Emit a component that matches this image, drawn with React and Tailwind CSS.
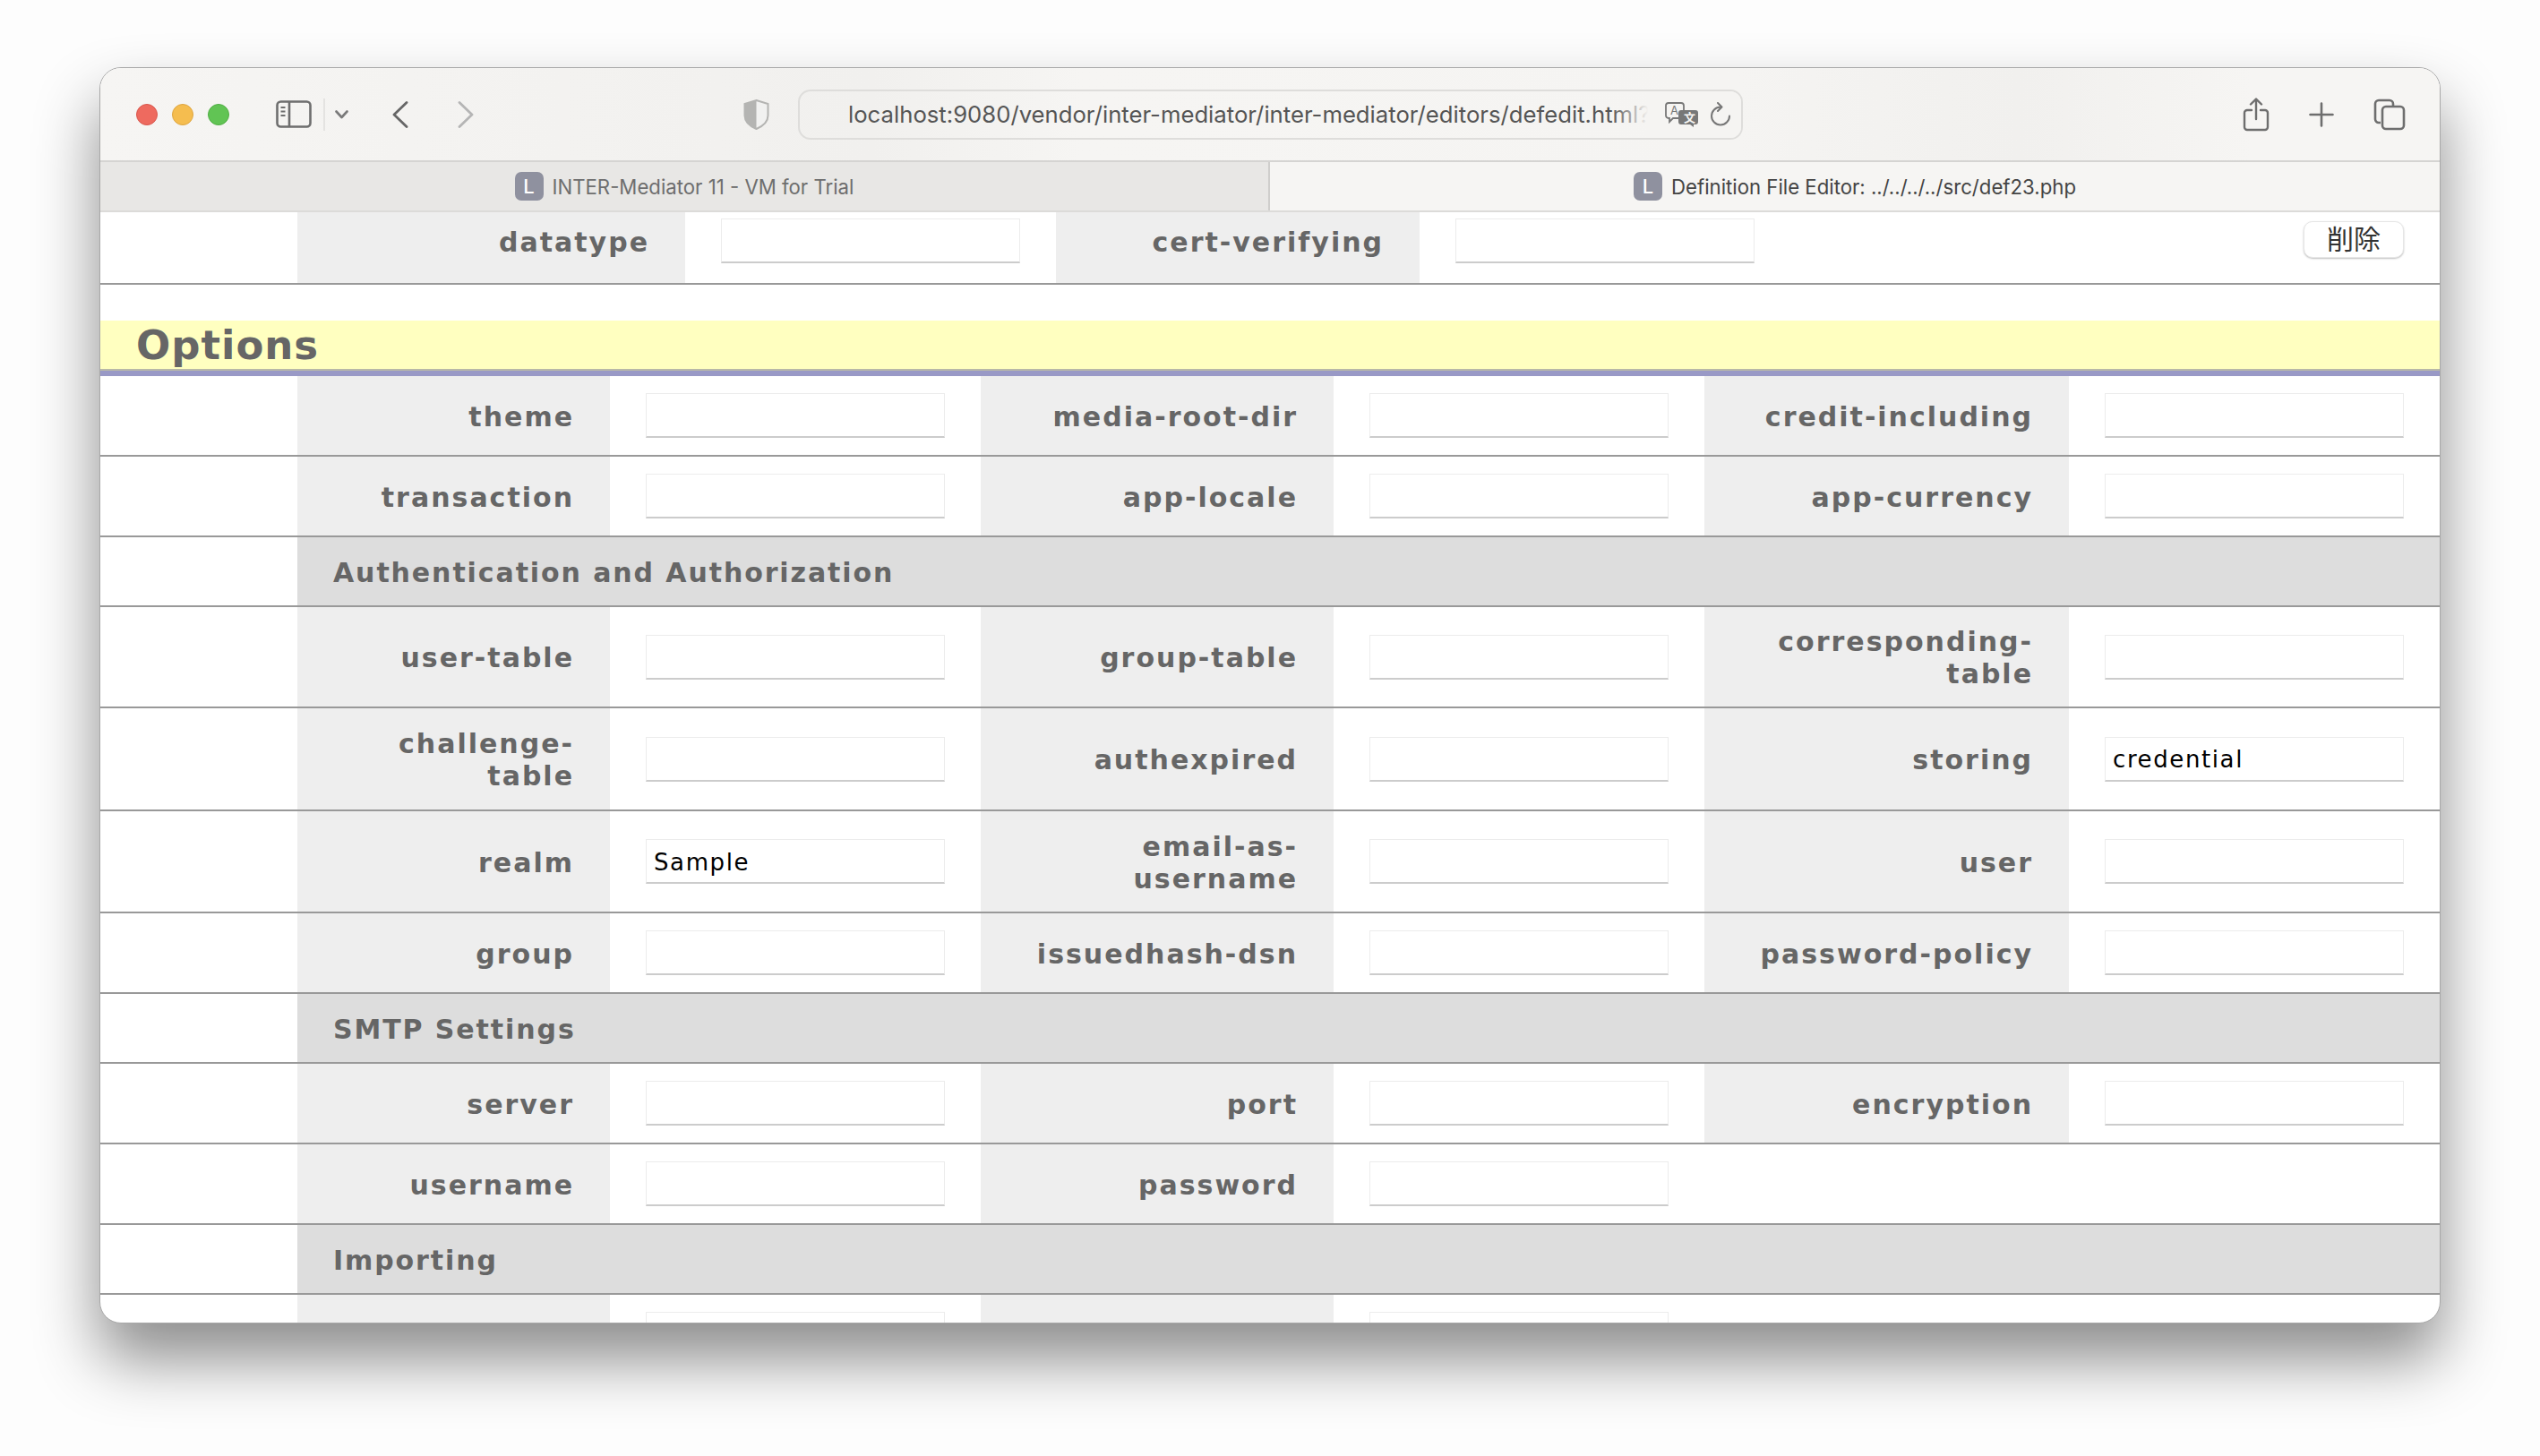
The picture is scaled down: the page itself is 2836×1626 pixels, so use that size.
import React from 'react';

const labelFont = "font-['DejaVu_Sans',sans-serif] font-bold text-[#666]";

function Field({ value = '', className = '' }) {
  return (
    <div className={`w-[414px] flex items-center pl-[40px] shrink-0 ${className}`}>
      <input
        readOnly
        value={value}
        className="w-[334px] h-[50px] bg-white border border-[#ececec] border-b-2 border-b-[#cccccc] px-[8px] pt-[2px] font-['DejaVu_Sans',sans-serif] text-[26px] tracking-[1.6px] text-black outline-none"
      />
    </div>
  );
}

function Label({ text, width, className = '' }) {
  return (
    <div className={`${width} shrink-0 self-stretch bg-[#eee] flex items-center justify-end px-[40px] text-right text-[30px] leading-[36px] tracking-[2px] ${labelFont} ${className}`}>
      <span className="pt-[3px]">{text}</span>
    </div>
  );
}

function Row({ height, cols }) {
  return (
    <div className={`${height} flex border-b-2 border-[#999] shrink-0`}>
      <div className="w-[220px] shrink-0" />
      <Label text={cols[0][0]} width="w-[349px]" />
      <Field value={cols[0][1]} />
      <Label text={cols[1][0]} width="w-[394px]" />
      <Field value={cols[1][1]} />
      {cols[2] && <Label text={cols[2][0]} width="w-[407px]" />}
      {cols[2] && <Field value={cols[2][1]} />}
    </div>
  );
}

function Section({ title }) {
  return (
    <div className="h-[78px] flex border-b-2 border-[#999] shrink-0">
      <div className="w-[220px] shrink-0" />
      <div className={`flex-1 bg-[#ddd] flex items-center pl-[40px] pt-[2px] text-[30px] tracking-[1.9px] ${labelFont}`}>{title}</div>
    </div>
  );
}

function Favicon() {
  return (
    <div className="w-[32px] h-[32px] rounded-[7px] bg-[#8f919f] flex items-center justify-center text-white text-[22px] font-['Inter',sans-serif] font-medium">
      L
    </div>
  );
}

export default function App() {
  return (
    <div className="w-[2836px] h-[1626px] bg-[#fdfdfd] pl-[111px] pt-[75px] overflow-hidden">
      <div className="w-[2614px] h-[1403px] rounded-[24px] border border-[#a8a8a8] bg-white overflow-hidden flex flex-col shadow-[0_40px_70px_rgba(0,0,0,0.45)]">

        {/* Toolbar */}
        <div className="h-[105px] shrink-0 bg-[linear-gradient(to_right,#f6f5f3_0%,#f1f0ee_33%,#f6f5f3_42%,#f5f4f2_70%,#f1f0ee_82%,#f6f5f3_92%)] border-b-2 border-[#d5d4d2] flex items-center text-[#666]">
          <div className="ml-[40px] w-[24px] h-[24px] rounded-full bg-[#ee6a5f] border border-[#d9574d]" />
          <div className="ml-[16px] w-[24px] h-[24px] rounded-full bg-[#f5bd4f] border border-[#dea540]" />
          <div className="ml-[16px] w-[24px] h-[24px] rounded-full bg-[#61c454] border border-[#50ae44]" />

          <svg className="ml-[52px]" width="40" height="31" viewBox="0 0 40 31" fill="none" stroke="#6e6e6e" strokeWidth="2.6">
            <rect x="1.5" y="1.5" width="37" height="28" rx="4" />
            <path d="M15 1.5v28" />
            <path d="M5.5 8h5M5.5 12.5h5M5.5 17h5" strokeWidth="2" />
          </svg>
          <div className="ml-[13px] w-[2px] h-[36px] bg-[#e4e3e1]" />
          <svg className="ml-[11px]" width="15" height="10" viewBox="0 0 15 10" fill="none" stroke="#7a7a7a" strokeWidth="2.6" strokeLinecap="round" strokeLinejoin="round">
            <path d="M1.5 1.5 7.5 8l6-6.5" />
          </svg>
          <svg className="ml-[49px]" width="18" height="30" viewBox="0 0 18 30" fill="none" stroke="#666" strokeWidth="2.8" strokeLinecap="round" strokeLinejoin="round">
            <path d="M16 1.5 2 15l14 13.5" />
          </svg>
          <svg className="ml-[55px]" width="18" height="30" viewBox="0 0 18 30" fill="none" stroke="#b5b5b5" strokeWidth="2.8" strokeLinecap="round" strokeLinejoin="round">
            <path d="M2 1.5 16 15 2 28.5" />
          </svg>

          <svg className="ml-[301px]" width="29" height="34" viewBox="0 0 29 34">
            <path d="M14.5 1 27.5 5v13c0 7-6 12-13 15C7.5 30 1.5 25 1.5 18V5z" fill="#f1f1f0" stroke="#b4b4b2" strokeWidth="2" />
            <path d="M14.5 1 1.5 5v13c0 7 6 12 13 15z" fill="#b4b4b2" />
          </svg>

          <div className="ml-[32px] w-[1055px] h-[56px] rounded-[14px] border-2 border-[#dedddb] flex items-center pl-[54px] relative overflow-hidden">
            <span className="pt-[2px] font-['Inter',sans-serif] text-[25.7px] text-[#555] whitespace-nowrap">
              localhost:9080/vendor/inter-mediator/inter-mediator/editors/defedit.html?
            </span>
            <div className="absolute right-0 top-0 bottom-0 w-[144px] flex items-center justify-end pr-[12px] bg-[linear-gradient(to_right,rgba(245,244,242,0),#f5f4f2_28%)]">
              <svg width="37" height="28" viewBox="0 0 37 28">
                <path d="M4 1h14a3 3 0 0 1 3 3v11a3 3 0 0 1-3 3H9l-4 4v-4H4a3 3 0 0 1-3-3V4a3 3 0 0 1 3-3z" fill="none" stroke="#777" strokeWidth="1.8" />
                <text x="6" y="14" fontSize="13" fill="#777" fontFamily="Inter, sans-serif">A</text>
                <path d="M18 9h16a3 3 0 0 1 3 3v10a3 3 0 0 1-3 3h-2v3l-4-3H18a3 3 0 0 1-3-3V12a3 3 0 0 1 3-3z" fill="#777" />
                <text x="21" y="22" fontSize="13" fontWeight="700" fill="#f6f5f3" fontFamily="'Noto Sans CJK SC', sans-serif">文</text>
              </svg>
              <svg className="ml-[14px]" width="22" height="27" viewBox="0 0 22 27" fill="none" stroke="#777" strokeWidth="2" strokeLinecap="round" strokeLinejoin="round">
                <path d="M11 5.5a10 10 0 1 0 10 10" />
                <path d="M8 1l4.5 4.5L8 10" />
              </svg>
            </div>
          </div>

          <svg className="ml-[558px]" width="30" height="38" viewBox="0 0 30 38" fill="none" stroke="#6e6e6e" strokeWidth="2.4" strokeLinecap="round" strokeLinejoin="round">
            <path d="M10 14H5a3 3 0 0 0-3 3v16a3 3 0 0 0 3 3h20a3 3 0 0 0 3-3V17a3 3 0 0 0-3-3h-5" />
            <path d="M15 24V2M9 7.5 15 1.5l6 6" />
          </svg>
          <svg className="ml-[44px]" width="28" height="28" viewBox="0 0 28 28" fill="none" stroke="#6e6e6e" strokeWidth="2.6" strokeLinecap="round">
            <path d="M14 1.5v25M1.5 14h25" />
          </svg>
          <svg className="ml-[44px]" width="36" height="36" viewBox="0 0 36 36" fill="none" stroke="#6e6e6e" strokeWidth="2.6">
            <path d="M8 27H6a4 4 0 0 1-4-4V6a4 4 0 0 1 4-4h12a4 4 0 0 1 4 4v2" />
            <rect x="10" y="9" width="24" height="25" rx="4" />
          </svg>
        </div>

        {/* Tab bar */}
        <div className="h-[56px] shrink-0 flex border-b-2 border-[#dcdbd9]">
          <div className="w-[1306px] bg-[#e8e7e5] border-r-2 border-[#cfcecc] flex items-center justify-center gap-[10px] font-['Inter',sans-serif] text-[22.2px] text-[#6e6e6e]">
            <Favicon />
            <span className="pt-[2px]">INTER-Mediator 11 - VM for Trial</span>
          </div>
          <div className="flex-1 bg-[#f6f5f3] flex items-center justify-center gap-[10px] font-['Inter',sans-serif] text-[22.2px] text-[#444]">
            <Favicon />
            <span className="pt-[2px]">Definition File Editor: ../../../../src/def23.php</span>
          </div>
        </div>

        {/* Page */}
        <div className="flex-1 overflow-hidden flex flex-col">
          <div className="h-[81px] flex border-b-2 border-[#999] shrink-0">
            <div className="w-[220px] shrink-0" />
            <Label text="datatype" width="w-[433px]" className="pb-[14px]" />
            <Field className="pb-[16px]" />
            <Label text="cert-verifying" width="w-[406px]" className="pb-[14px]" />
            <Field className="pb-[16px]" />
            <div className="flex-1 flex justify-end pr-[40px] pt-[10px]">
              <button className="w-[112px] h-[41px] rounded-[10px] bg-white border border-[#e6e6e6] shadow-[0_1px_2px_rgba(0,0,0,0.25)] font-['Noto_Sans_CJK_JP',sans-serif] text-[30px] leading-none text-[#333] pb-[5px]">
                削除
              </button>
            </div>
          </div>

          <div className="h-[40px] shrink-0" />

          <div className="h-[62px] shrink-0 border-b-[6px] border-[#9999c6]">
            <div className={`h-[56px] bg-[#ffffc0] border-b-2 border-[#b8b8a8] flex items-center pl-[40px] pt-[2px] text-[45px] tracking-[1px] ${labelFont}`}>
              Options
            </div>
          </div>

          <Row height="h-[90px]" cols={[['theme'], ['media-root-dir'], ['credit-including']]} />
          <Row height="h-[90px]" cols={[['transaction'], ['app-locale'], ['app-currency']]} />
          <Section title="Authentication and Authorization" />
          <Row height="h-[113px]" cols={[['user-table'], ['group-table'], ['corresponding-table']]} />
          <Row height="h-[115px]" cols={[['challenge-table'], ['authexpired'], ['storing', 'credential']]} />
          <Row height="h-[114px]" cols={[['realm', 'Sample'], ['email-as-username'], ['user']]} />
          <Row height="h-[90px]" cols={[['group'], ['issuedhash-dsn'], ['password-policy']]} />
          <Section title="SMTP Settings" />
          <Row height="h-[90px]" cols={[['server'], ['port'], ['encryption']]} />
          <Row height="h-[90px]" cols={[['username'], ['password']]} />
          <Section title="Importing" />
          <Row height="h-[90px]" cols={[[''], ['']]} />
        </div>
      </div>
    </div>
  );
}
